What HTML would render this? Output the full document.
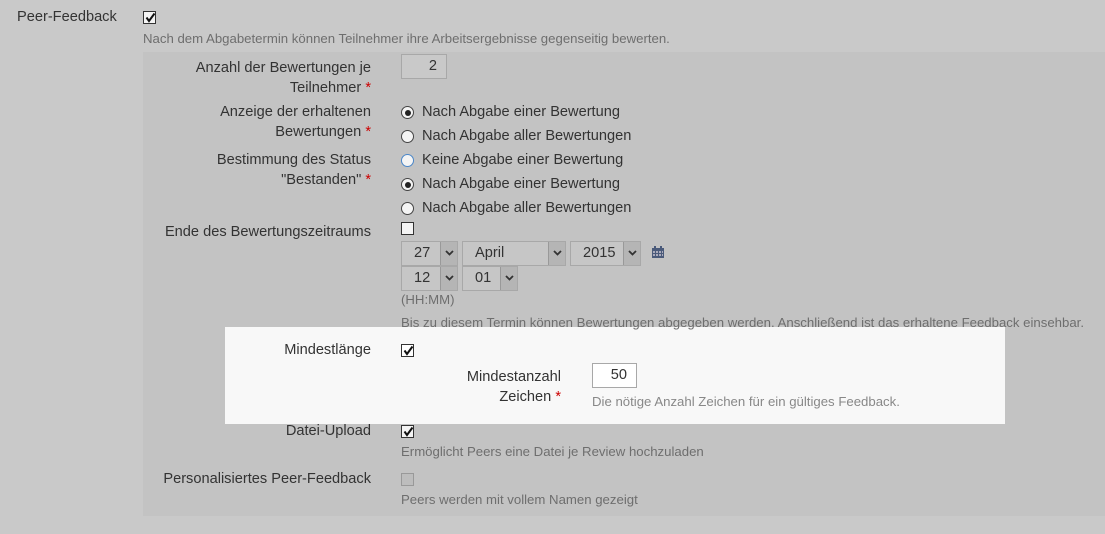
<!DOCTYPE html>
<html><head><meta charset="utf-8"><style>
*{box-sizing:border-box;margin:0;padding:0}
body{width:1105px;height:534px;background:#c9c9c9;font-family:"Liberation Sans",sans-serif;font-size:14.6px;color:#333;position:relative;overflow:hidden}
.a{position:absolute;white-space:nowrap;line-height:20px}
.r{text-align:right}
.h{font-size:13.2px;color:#6e6e6e}
.s{color:#c00}
.panel{position:absolute;left:143px;top:52px;width:962px;height:464px;background:#c3c3c3}
.white{position:absolute;left:225px;top:327px;width:780px;height:97px;background:#f8f8f8}
.cb{position:absolute;width:13px;height:13px;border:1px solid #333;background:#f4f4f4}
.cb svg{position:absolute;left:1px;top:0}
.rad{position:absolute;width:13px;height:13px;border:1px solid #444;border-radius:50%;background:#f4f4f4}
.rad.on::after{content:"";position:absolute;left:2.5px;top:2.5px;width:6px;height:6px;border-radius:50%;background:#222}
.inp{position:absolute;border:1px solid #a8a8a8;text-align:right;padding-right:9px;line-height:22px}
.sel{position:absolute;height:25px;border:1px solid #a8a8a8;background:#c6c6c6;line-height:23px;padding-left:12px}
.sel .ar{position:absolute;right:0;top:0;width:17px;height:23px;background:#b5b5b5;border-left:1px solid #999}
.sel .ar svg{position:absolute;left:4px;top:8px}
</style></head><body>
<div class="panel"></div>
<div class="white"></div>

<div class="a" style="left:17px;top:7px">Peer-Feedback</div>
<div class="cb" style="left:143px;top:11px"><svg width="11" height="11" viewBox="0 0 11 11"><path d="M1.5 5.5 L4 9 L9.5 1.5" stroke="#111" stroke-width="2" fill="none"/></svg></div>
<div class="a h" style="left:143px;top:29px">Nach dem Abgabetermin können Teilnehmer ihre Arbeitsergebnisse gegenseitig bewerten.</div>

<div class="a r" style="right:734px;top:58px;line-height:20px">Anzahl der Bewertungen je<br>Teilnehmer <span class="s">*</span></div>
<div class="inp" style="left:401px;top:54px;width:46px;height:25px;background:#c9c9c9">2</div>

<div class="a r" style="right:734px;top:102px;line-height:20px">Anzeige der erhaltenen<br>Bewertungen <span class="s">*</span></div>
<div class="rad on" style="left:401px;top:106px"></div><div class="a" style="left:422px;top:102px">Nach Abgabe einer Bewertung</div>
<div class="rad" style="left:401px;top:130px"></div><div class="a" style="left:422px;top:126px">Nach Abgabe aller Bewertungen</div>

<div class="a r" style="right:734px;top:150px;line-height:20px">Bestimmung des Status<br>"Bestanden" <span class="s">*</span></div>
<div class="rad" style="left:401px;top:154px;border-color:#4a86c8"></div><div class="a" style="left:422px;top:150px">Keine Abgabe einer Bewertung</div>
<div class="rad on" style="left:401px;top:178px"></div><div class="a" style="left:422px;top:174px">Nach Abgabe einer Bewertung</div>
<div class="rad" style="left:401px;top:202px"></div><div class="a" style="left:422px;top:198px">Nach Abgabe aller Bewertungen</div>

<div class="a r" style="right:734px;top:222px">Ende des Bewertungszeitraums</div>
<div class="cb" style="left:401px;top:222px"></div>

<div class="sel" style="left:401px;top:241px;width:57px">27<div class="ar"><svg width="9" height="6"><path d="M1 1L4.5 4.5L8 1" stroke="#333" stroke-width="1.8" fill="none"/></svg></div></div>
<div class="sel" style="left:462px;top:241px;width:104px">April<div class="ar"><svg width="9" height="6"><path d="M1 1L4.5 4.5L8 1" stroke="#333" stroke-width="1.8" fill="none"/></svg></div></div>
<div class="sel" style="left:570px;top:241px;width:71px">2015<div class="ar"><svg width="9" height="6"><path d="M1 1L4.5 4.5L8 1" stroke="#333" stroke-width="1.8" fill="none"/></svg></div></div>
<svg style="position:absolute;left:652px;top:246px" width="12" height="12" viewBox="0 0 12 12"><rect x="0" y="2" width="12" height="10" fill="#4a5a7a"/><rect x="2" y="0" width="2" height="3" fill="#4a5a7a"/><rect x="8" y="0" width="2" height="3" fill="#4a5a7a"/><g fill="#aab"><rect x="1" y="5" width="2" height="2"/><rect x="4" y="5" width="2" height="2"/><rect x="7" y="5" width="2" height="2"/><rect x="1" y="8" width="2" height="2"/><rect x="4" y="8" width="2" height="2"/><rect x="7" y="8" width="2" height="2"/><rect x="10" y="5" width="1" height="2"/><rect x="10" y="8" width="1" height="2"/></g></svg>
<div class="sel" style="left:401px;top:266px;width:57px">12<div class="ar"><svg width="9" height="6"><path d="M1 1L4.5 4.5L8 1" stroke="#333" stroke-width="1.8" fill="none"/></svg></div></div>
<div class="sel" style="left:462px;top:266px;width:56px">01<div class="ar"><svg width="9" height="6"><path d="M1 1L4.5 4.5L8 1" stroke="#333" stroke-width="1.8" fill="none"/></svg></div></div>
<div class="a h" style="left:401px;top:290px">(HH:MM)</div>
<div class="a h" style="left:401px;top:313px">Bis zu diesem Termin können Bewertungen abgegeben werden. Anschließend ist das erhaltene Feedback einsehbar.</div>

<div class="a r" style="right:734px;top:340px">Mindestlänge</div>
<div class="cb" style="left:401px;top:344px;background:#fff"><svg width="11" height="11" viewBox="0 0 11 11"><path d="M1.5 5.5 L4 9 L9.5 1.5" stroke="#111" stroke-width="2" fill="none"/></svg></div>
<div class="a r" style="right:544px;top:367px;line-height:20px">Mindestanzahl<br>Zeichen <span class="s">*</span></div>
<div class="inp" style="left:592px;top:363px;width:45px;height:25px;background:#fff">50</div>
<div class="a h" style="left:592px;top:392px;color:#888">Die nötige Anzahl Zeichen für ein gültiges Feedback.</div>

<div class="a r" style="right:734px;top:421px">Datei-Upload</div>
<div class="cb" style="left:401px;top:425px"><svg width="11" height="11" viewBox="0 0 11 11"><path d="M1.5 5.5 L4 9 L9.5 1.5" stroke="#111" stroke-width="2" fill="none"/></svg></div>
<div class="a h" style="left:401px;top:442px">Ermöglicht Peers eine Datei je Review hochzuladen</div>

<div class="a r" style="right:734px;top:469px">Personalisiertes Peer-Feedback</div>
<div class="cb" style="left:401px;top:473px;border-color:#999;background:#bdbdbd"></div>
<div class="a h" style="left:401px;top:490px">Peers werden mit vollem Namen gezeigt</div>
</body></html>
